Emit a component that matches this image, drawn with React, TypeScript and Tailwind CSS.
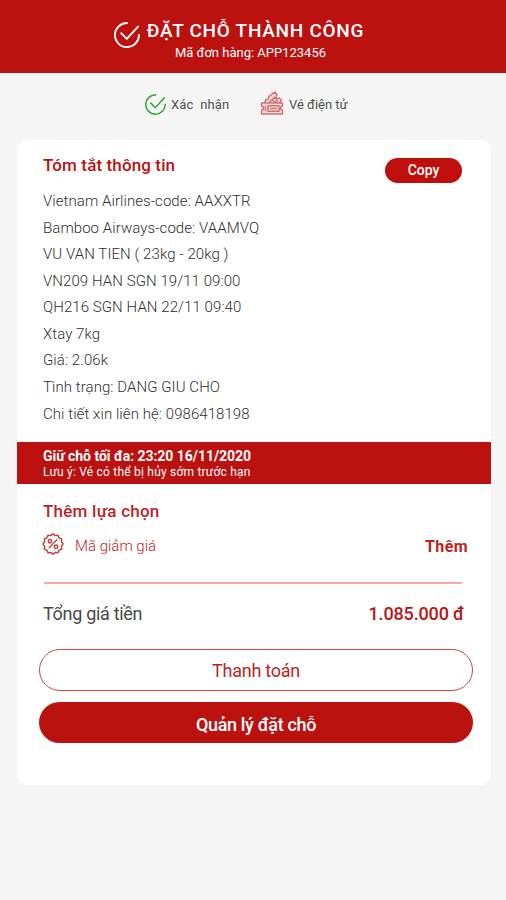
const SUMMARY_LINES = [
  "Vietnam Airlines-code: AAXXTR",
  "Bamboo Airways-code: VAAMVQ",
  "VU VAN TIEN ( 23kg - 20kg )",
  "VN209 HAN SGN 19/11 09:00",
  "QH216 SGN HAN 22/11 09:40",
  "Xtay 7kg",
  "Giá: 2.06k",
  "Tình trạng: DANG GIU CHO",
  "Chi tiết xin liên hệ: 0986418198",
];

function CheckIcon({ className = "" }: { className?: string }) {
  return (
    <svg viewBox="0 0 26 26" fill="none" stroke="currentColor" strokeWidth="1.9" className={className}>
      <path d="M13.8 1.1A12 12 0 1 0 24.9 12.2" />
      <path d="M6.7 10.7l6 6.2L24.5 4.2" />
    </svg>
  );
}

function TicketIcon({ className = "" }: { className?: string }) {
  return (
    <svg viewBox="0 0 24 24" fill="none" stroke="currentColor" strokeWidth="1.5" strokeLinejoin="round" className={className}>
      <path fill="#f6dcdc" d="M4.500 11.800L6 8.500a2 2 0 0 0 2.500-2.600L14.800 1l2.200 2.800a2 2 0 0 0 2.300 3.300l2.200 1.900-1.500 2.800" />
      <path fill="#f6dcdc" d="M1.500 12h21v3.300a2 2 0 0 0 0 4v3.700h-21v-3.700a2 2 0 0 0 0-4z" />
      <path d="M9 11.600l5.700-5.400 3.600 5.400M11.800 9l4.200 2.400" />
      <path d="M5.500 14.700v5.600M8 14.700h11v5.600H8zM10 17.500h7" />
    </svg>
  );
}

function DiscountIcon({ className = "" }: { className?: string }) {
  return (
    <svg viewBox="0 0 24 24" fill="none" stroke="currentColor" strokeWidth="1.5" strokeLinejoin="round" className={className}>
      <path d="M12 1l2.500 1.900 3-.400 1.200 2.800 2.800 1.200-.400 3L23 12l-1.900 2.500.400 3-2.800 1.200-1.200 2.800-3-.400L12 23l-2.500-1.900-3 .400-1.200-2.800-2.800-1.200.400-3L1 12l1.900-2.500-.400-3 2.800-1.200 1.200-2.800 3 .400z" />
      <path d="M16.500 7l-9 9.500" />
      <circle cx="8.700" cy="9" r="1.900" />
      <circle cx="15.300" cy="15" r="1.900" />
    </svg>
  );
}

export default function App() {
  return (
    <div className="min-h-screen bg-[#f5f5f5] font-['Roboto','Noto_Sans',sans-serif] text-[#505050]">
      <header className="flex h-[73px] justify-center bg-[#bb110f] pt-5 pr-7 text-white">
        <CheckIcon className="mt-0.5 h-[26px] w-[26px] shrink-0" />
        <div className="ml-[7px] w-[218px] text-center whitespace-nowrap">
          <h1 className="text-[19px] leading-[22px] font-medium tracking-[0.72px]">ĐẶT CHỖ THÀNH CÔNG</h1>
          <p className="mt-[2px] -ml-2.5 text-[13px] leading-[18px]">Mã đơn hàng: APP123456</p>
        </div>
      </header>

      <div className="flex h-[67px] items-center pb-1 pl-[145px] text-[13px] leading-5">
        <CheckIcon className="h-[21px] w-[21px] text-[#35a93a]" />
        <span className="ml-[5px] w-[83px] tracking-[0.15px] whitespace-pre">Xác  nhận</span>
        <TicketIcon className="mb-[4px] ml-[6px] h-6 w-6 text-[#cf7373]" />
        <span className="ml-[5px] whitespace-nowrap">Vé điện tử</span>
      </div>

      <main className="ml-[17px] h-[645px] w-[474px] rounded-[11px] bg-white pt-[15px]">
        <div className="flex justify-between pr-[29px] pl-[26px]">
          <h2 className="text-[17px] leading-5 font-medium tracking-[0.12px] text-[#bb110f]">Tóm tắt thông tin</h2>
          <button className="mt-[3px] h-[25px] w-[77px] rounded-full bg-[#bf0e0b] text-[14px] font-medium text-white">Copy</button>
        </div>

        <ul className="mt-[5px] pl-[26px] text-[15px] leading-[26.56px] font-light tracking-[0.07px] whitespace-nowrap text-[#303030]">
          {SUMMARY_LINES.map((line) => (
            <li key={line}>{line}</li>
          ))}
        </ul>

        <div className="mt-[15px] h-[42px] bg-[#bb110f] pt-[6px] pl-[26px] whitespace-nowrap text-white">
          <p className="text-[14px] leading-[16px] font-bold tracking-[-0.04px]">Giữ chỗ tối đa: 23:20 16/11/2020</p>
          <p className="text-[12px] leading-[16px] tracking-[0.21px]">Lưu ý: Vé có thể bị hủy sớm trước hạn</p>
        </div>

        <section className="pr-[24px] pl-[26px]">
          <h2 className="pt-[17px] text-[17px] leading-5 font-medium tracking-[0.23px] text-[#bb2523]">Thêm lựa chọn</h2>
          <div className="mt-[13px] flex h-6 items-center">
            <DiscountIcon className="mb-[4px] -ml-px h-[22px] w-[22px] text-[#c43b3b]" />
            <span className="ml-[11px] text-[15px] font-light text-[#bb2523]">Mã giảm giá</span>
            <button className="mt-px -mr-px ml-auto text-[16px] font-bold tracking-[0.4px] text-[#bb2523]">Thêm</button>
          </div>
          <hr className="mt-[24px] mr-[5px] ml-px border-t-2 border-[#f3aaa0]" />
          <div className="mt-[17px] flex h-6 items-center justify-between pr-[3px]">
            <span className="text-[18px] tracking-[-0.3px] text-[#484848]">Tổng giá tiền</span>
            <span className="text-[18px] font-medium tracking-[-0.15px] text-[#bb1513]">1.085.000 đ</span>
          </div>
        </section>

        <div className="flex flex-col gap-[11px] pt-[24px] pr-[18px] pl-[22px]">
          <button className="h-[42px] rounded-full border border-[#c94c4c] text-[18px] tracking-[-0.25px] text-[#bb2523]">Thanh toán</button>
          <button className="h-[41px] rounded-full bg-[#bb110f] pt-[3px] text-[18px] font-medium tracking-[-0.35px] text-white">Quản lý đặt chỗ</button>
        </div>
      </main>
    </div>
  );
}
